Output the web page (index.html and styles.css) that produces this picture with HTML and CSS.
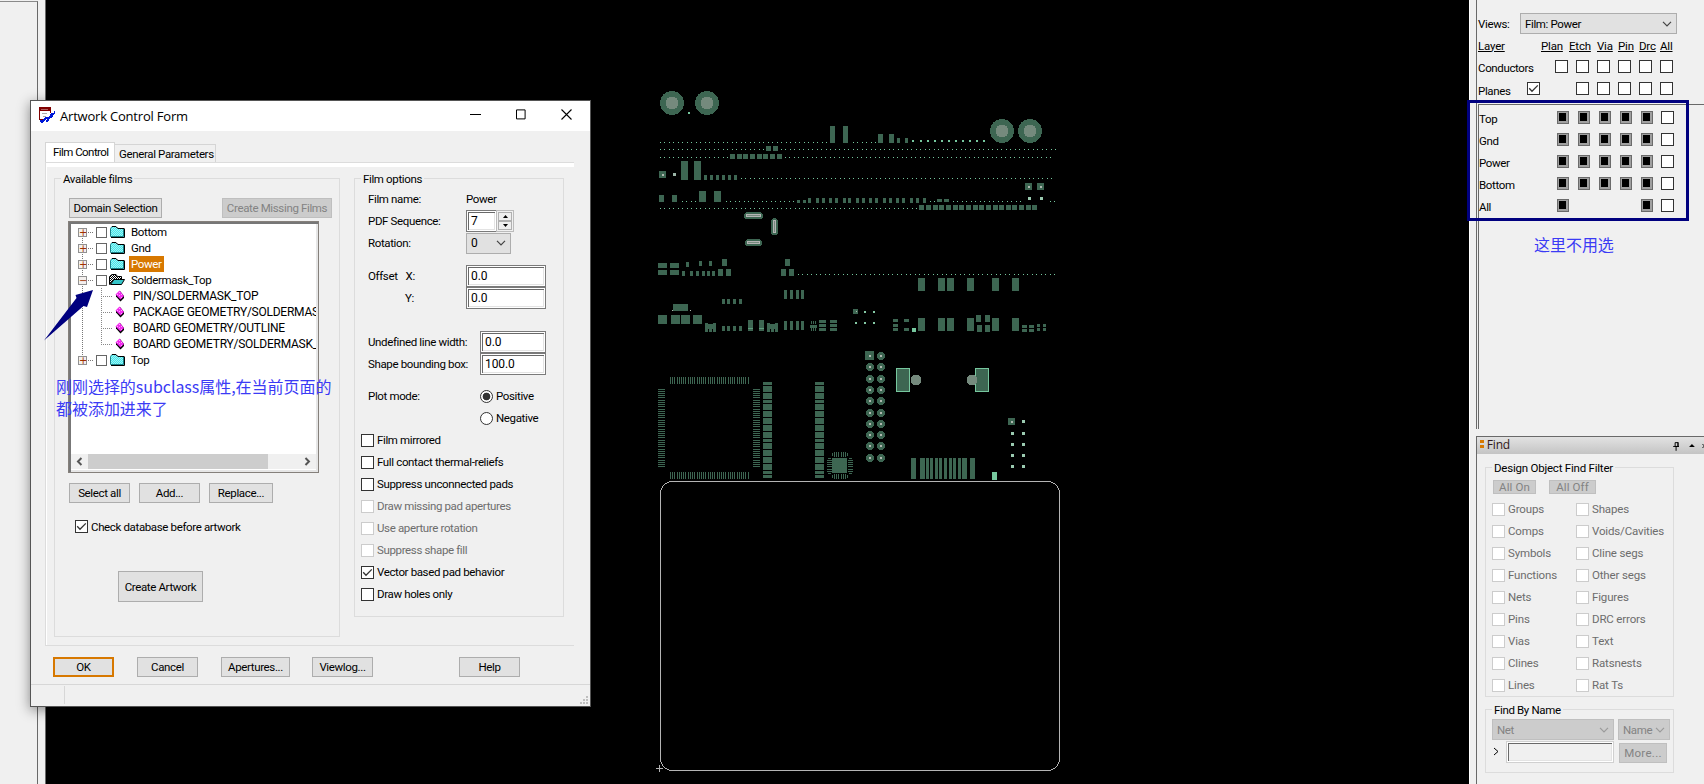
FILE: index.html
```html
<!DOCTYPE html>
<html lang="zh">
<head>
<meta charset="utf-8">
<title>Artwork Control Form</title>
<link rel="stylesheet" href="styles.css">
</head>
<body>
<svg class="defs" width="0" height="0">
  <symbol id="tick" viewBox="0 0 13 13"><path d="M2.2 6.3L5 9.2L10.8 3.4" fill="none" stroke="#333" stroke-width="1.3"/></symbol>
  <symbol id="chev" viewBox="0 0 10 6"><path d="M1 .8L5 4.8L9 .8" fill="none" stroke="currentColor" stroke-width="1.2"/></symbol>
  <pattern id="mesh" width="2" height="2" patternUnits="userSpaceOnUse"><path d="M0 0h2v2h-2z" fill="#3fe9ee"/><path d="M0 0h1v1h-1zM1 1h1v1h-1z" fill="#a5f0f0"/></pattern>
  <pattern id="dark" width="2" height="2" patternUnits="userSpaceOnUse"><path d="M0 0h2v2h-2z" fill="#fff"/><path d="M0 0h1v1h-1zM1 1h1v1h-1z" fill="#000"/></pattern>
  <symbol id="folder" viewBox="0 0 16 14"><path d="M1.500 11.500V3.500L3 1.500H6.500L8.500 3.500H14.500V11.500Z" fill="url(#mesh)" stroke="#1b7f86"/><path d="M2 12.500H15.500V3.500M3 1.500H7L9 3.500H15" fill="none" stroke="#000"/></symbol>
  <symbol id="open" viewBox="0 0 16 14"><path d="M.5 11.500V3.500L3 1.500H7L8.500 3.500H12.500V6.500H4.500Z" fill="url(#dark)" stroke="#000"/><path d="M1.500 11.500L5 6.500H15.500L12.500 11.500Z" fill="#35c4c8" stroke="#000"/></symbol>
  <symbol id="leaf" viewBox="0 0 10 12"><path d="M1 5L5 1L9 6V8L5.500 11.500L1 6.500Z" fill="#000"/><path d="M.5 4.500L4.500.5L9 6L5.500 9.500Z" fill="#f32bf0"/><path d="M2 4.500h1M4 2.500h1M4 5.500h1M6 4.500h1M6 7.500h1" stroke="#ffaaff"/></symbol>
</svg>
<main class="desktop">
  <div class="dock-left"><div class="dock-pane"></div></div>
  <svg class="canvas" id="board" viewBox="46 0 1423 784" width="1423" height="784" shape-rendering="crispEdges"></svg>
  <aside class="dock-right">
    <section class="vis">
      <div class="views"><span>Views:</span><div class="select wide"><span>Film: Power</span><svg class="chev"><use href="#chev"/></svg></div></div>
      <div class="grid heads"><u>Layer</u><u>Plan</u><u>Etch</u><u>Via</u><u>Pin</u><u>Drc</u><u>All</u></div>
      <div class="grid r1"><span>Conductors</span><i class="cb"></i><i class="cb"></i><i class="cb"></i><i class="cb"></i><i class="cb"></i><i class="cb"></i></div>
      <div class="grid r1"><span class="planes"><span>Planes</span><i class="cb"><svg><use href="#tick"/></svg></i></span><b></b><i class="cb"></i><i class="cb"></i><i class="cb"></i><i class="cb"></i><i class="cb"></i></div>
      <div class="layers">
        <div class="grid"><span>Top</span><i class="sw"></i><i class="sw"></i><i class="sw"></i><i class="sw"></i><i class="sw"></i><i class="cb"></i></div>
        <div class="grid"><span>Gnd</span><i class="sw"></i><i class="sw"></i><i class="sw"></i><i class="sw"></i><i class="sw"></i><i class="cb"></i></div>
        <div class="grid"><span>Power</span><i class="sw"></i><i class="sw"></i><i class="sw"></i><i class="sw"></i><i class="sw"></i><i class="cb"></i></div>
        <div class="grid"><span>Bottom</span><i class="sw"></i><i class="sw"></i><i class="sw"></i><i class="sw"></i><i class="sw"></i><i class="cb"></i></div>
        <div class="grid"><span>All</span><i class="sw"></i><b></b><b></b><b></b><i class="sw"></i><i class="cb"></i></div>
      </div>
    </section>
    <section class="find">
      <header class="find-head"><i class="grip"></i><span class="find-title">Find</span>
        <svg width="40" height="12" viewBox="0 0 40 12"><path d="M9.500 2.500h3v4h-3zM7.500 6.500h6M10.500 7v4M12.500 2v5" fill="none" stroke="#000"/><path d="M24 7h6l-3-3z"/><path d="M38 4l4 4M42 4l-4 4" stroke="#000"/></svg>
      </header>
      <div class="group filter"><span class="legend">Design Object Find Filter</span>
        <div class="allbtns"><button class="btn off on1">All On</button><button class="btn off on2">All Off</button></div>
        <div class="objs">
          <label><i class="cb dim"></i>Groups</label><label><i class="cb dim"></i>Shapes</label>
          <label><i class="cb dim"></i>Comps</label><label><i class="cb dim"></i>Voids/Cavities</label>
          <label><i class="cb dim"></i>Symbols</label><label><i class="cb dim"></i>Cline segs</label>
          <label><i class="cb dim"></i>Functions</label><label><i class="cb dim"></i>Other segs</label>
          <label><i class="cb dim"></i>Nets</label><label><i class="cb dim"></i>Figures</label>
          <label><i class="cb dim"></i>Pins</label><label><i class="cb dim"></i>DRC errors</label>
          <label><i class="cb dim"></i>Vias</label><label><i class="cb dim"></i>Text</label>
          <label><i class="cb dim"></i>Clines</label><label><i class="cb dim"></i>Ratsnests</label>
          <label><i class="cb dim"></i>Lines</label><label><i class="cb dim"></i>Rat Ts</label>
        </div>
      </div>
      <div class="group byname"><span class="legend">Find By Name</span>
        <div class="bn1"><div class="select off net"><span>Net</span><svg class="chev"><use href="#chev"/></svg></div><div class="select off name"><span>Name</span><svg class="chev"><use href="#chev"/></svg></div></div>
        <div class="bn2"><svg class="arrow" width="12" height="10" viewBox="0 0 12 10"><path d="M1 1L5 4.500L1 8" fill="none" stroke="#000"/></svg><div class="field grey"></div><button class="btn off more">More...</button></div>
      </div>
    </section>
  </aside>
</main>

<div class="dialog">
  <header class="titlebar">
    <svg width="17" height="17" viewBox="0 0 17 17" shape-rendering="crispEdges"><path d="M1 1h10v11h-10z" fill="#fff"/><path d="M0 0h12v4h-12zM0 0h1v13h-1zM11 0h1v6h-1zM0 12h5v1h-5z" fill="#800000"/><path d="M2 2.500h7" stroke="#b06060"/><path d="M3 6.500h5M4 9.500h3" stroke="#aaa"/><path d="M15 4h1v2l-3 5h-2l-2 4h-2l1-3-4 3h-2v-1l5-4h3l2-4h3zM1 13h3v3h-2z" fill="#0018d8"/></svg>
    <span class="title">Artwork Control Form</span>
    <svg width="104" height="12" viewBox="0 0 104 12"><path d="M0 5.500h11" stroke="#000" stroke-width="1"/><path d="M46.500 .9h8.600v9h-8.600z" fill="none" stroke="#000"/><path d="M91.500 .5l10 10M101.500 .5l-10 10" stroke="#000" stroke-width="1.1"/></svg>
  </header>
  <div class="tabs"><span class="tab active">Film Control</span><span class="tab">General Parameters</span></div>
  <div class="sheet">
    <div class="group films"><span class="legend">Available films</span>
      <div class="bar top"><button class="btn dom">Domain Selection</button><button class="btn off miss">Create Missing Films</button></div>
      <div class="tree">
        <div class="rows">
          <div class="row"><i class="pm">+</i><i class="link"></i><i class="cb s"></i><svg class="ic"><use href="#folder"/></svg><span>Bottom</span></div>
          <div class="row"><i class="pm">+</i><i class="link"></i><i class="cb s"></i><svg class="ic"><use href="#folder"/></svg><span>Gnd</span></div>
          <div class="row"><i class="pm">+</i><i class="link"></i><i class="cb s"></i><svg class="ic"><use href="#folder"/></svg><span class="sel">Power</span></div>
          <div class="row"><i class="pm">−</i><i class="link"></i><i class="cb s"></i><svg class="ic"><use href="#open"/></svg><span>Soldermask_Top</span></div>
          <div class="row kid"><svg class="lf"><use href="#leaf"/></svg><span>PIN/SOLDERMASK_TOP</span></div>
          <div class="row kid"><svg class="lf"><use href="#leaf"/></svg><span>PACKAGE GEOMETRY/SOLDERMAS</span></div>
          <div class="row kid"><svg class="lf"><use href="#leaf"/></svg><span>BOARD GEOMETRY/OUTLINE</span></div>
          <div class="row kid last"><svg class="lf"><use href="#leaf"/></svg><span>BOARD GEOMETRY/SOLDERMASK_</span></div>
          <div class="row"><i class="pm">+</i><i class="link"></i><i class="cb s"></i><svg class="ic"><use href="#folder"/></svg><span>Top</span></div>
        </div>
        <div class="hscroll"><svg width="17" height="15" viewBox="0 0 17 15"><path d="M10.500 4L7 7.500L10.500 11" fill="none" stroke="#555" stroke-width="2"/></svg><i class="thumb"></i><svg width="17" height="15" viewBox="0 0 17 15"><path d="M6.500 4L10 7.500L6.500 11" fill="none" stroke="#555" stroke-width="2"/></svg></div>
      </div>
      <div class="bar edit"><button class="btn w61">Select all</button><button class="btn w61">Add...</button><button class="btn w64">Replace...</button></div>
      <label class="check-db"><i class="cb"><svg><use href="#tick"/></svg></i>Check database before artwork</label>
      <button class="btn create">Create Artwork</button>
    </div>
    <div class="group options"><span class="legend">Film options</span>
      <div class="opt"><span class="k">Film name:</span><span>Power</span></div>
      <div class="opt"><span class="k">PDF Sequence:</span><div class="field f31">7</div><div class="spin"><i><svg width="5" height="3"><path d="M0 3h5l-2.500-3z"/></svg></i><i><svg width="5" height="3"><path d="M0 0h5l-2.500 3z"/></svg></i></div></div>
      <div class="opt"><span class="k">Rotation:</span><div class="select rot"><span>0</span><svg class="chev"><use href="#chev"/></svg></div></div>
      <div class="opt gap1"><span class="k offs"><span>Offset</span><span>X:</span></span><div class="field f80">0.0</div></div>
      <div class="opt"><span class="k ky">Y:</span><div class="field f80">0.0</div></div>
      <div class="opt gap2"><span class="k k2">Undefined line width:</span><div class="field f66">0.0</div></div>
      <div class="opt"><span class="k k2">Shape bounding box:</span><div class="field f66">100.0</div></div>
      <div class="opt gap3"><span class="k k2">Plot mode:</span><i class="radio on"></i><span class="rl">Positive</span></div>
      <div class="opt"><span class="k k2"></span><i class="radio"></i><span class="rl">Negative</span></div>
      <label class="chk"><i class="cb"></i>Film mirrored</label>
      <label class="chk"><i class="cb"></i>Full contact thermal-reliefs</label>
      <label class="chk"><i class="cb"></i>Suppress unconnected pads</label>
      <label class="chk gr"><i class="cb dim"></i>Draw missing pad apertures</label>
      <label class="chk gr"><i class="cb dim"></i>Use aperture rotation</label>
      <label class="chk gr"><i class="cb dim"></i>Suppress shape fill</label>
      <label class="chk"><i class="cb"><svg><use href="#tick"/></svg></i>Vector based pad behavior</label>
      <label class="chk"><i class="cb"></i>Draw holes only</label>
    </div>
  </div>
  <div class="actions"><button class="btn w61 ok">OK</button><button class="btn w61 cancel">Cancel</button><button class="btn ap">Apertures...</button><button class="btn w61 vl">Viewlog...</button><button class="btn w61 help">Help</button></div>
  <footer class="status"><i></i><svg width="8" height="8" viewBox="0 0 8 8"><path d="M6 0h2v2h-2zM3 3h2v2h-2zM6 3h2v2h-2zM0 6h2v2h-2zM3 6h2v2h-2zM6 6h2v2h-2z" fill="#bfbfbf"/></svg></footer>
</div>

<svg class="pointer" width="52" height="54" viewBox="0 0 52 54"><path d="M1 51.500L33.500 9L32.500 6L50 1L44 18L40.500 17Z" fill="#00007f"/></svg>
<p class="note note-tree">刚刚选择的subclass属性,在当前页面的<br>都被添加进来了</p>
<div class="frame"></div>
<p class="note note-vis">这里不用选</p>
<script src="board.js"></script>
</body>
</html>
```
FILE: styles.css
```css
* { box-sizing: border-box; }
body { margin: 0; width: 1704px; height: 784px; overflow: hidden; background: #f0f0f0; color: #000; font: 11.5px/14px Roboto, "Liberation Sans", sans-serif; letter-spacing: -0.36px; position: relative; }
i { font-style: normal; }
.defs { position: absolute; }
.desktop { display: flex; height: 784px; }
.dock-left { width: 46px; flex: none; padding-top: 1px; border-right: 1px solid #6b6b6b; }
.dock-pane { width: 38px; height: 783px; border-right: 1px solid #696969; border-top: 1px solid #8a8a8a; }
.canvas { flex: none; background: #000; display: block; }
.dock-right { flex: 1; min-width: 0; overflow: hidden; padding-left: 6px; border-left: 1px solid #fff; }

.cb { display: block; flex: none; width: 13px; height: 13px; background: #fff; border: 1px solid #333; }
.cb svg { display: block; width: 13px; height: 13px; margin: -1px; }
.cb.dim { border-color: #ccc; }
.cb.s { width: 11px; height: 11px; border-color: #666; }
.sw { display: block; width: 12px; height: 13px; background: #000; border: 2px solid #a0a0a0; border-width: 2px 3px 3px 2px; outline: 1px solid #6b6b6b; outline-offset: -1px; }
.btn { flex: none; height: 20px; padding: 0; border: 1px solid #adadad; background: #e1e1e1; color: #000; font: inherit; letter-spacing: inherit; text-align: center; white-space: nowrap; }
.btn.off { background: #ccc; border-color: #bfbfbf; color: #838383; }
.select { display: flex; flex: none; justify-content: space-between; align-items: center; height: 21px; padding: 0 4px; border: 1px solid #adadad; background: #e1e1e1; }
.select.off { background: #ccc; border-color: #bfbfbf; color: #838383; }
.chev { width: 10px; height: 6px; color: #444; }
.off .chev { color: #9b9b9b; }
.field { flex: none; height: 22px; border: 1px solid #7a7a7a; background: #fff; box-shadow: inset 0 0 0 1px #fff, inset 2px 2px 0 #696969, inset -2px -2px 0 #e3e3e3; padding: 3px 0 0 4px; font-size: 12px; letter-spacing: -.1px; }
.group { position: relative; border: 1px solid #dcdcdc; }
.legend { position: absolute; top: -7px; left: 6px; padding: 0 2px; background: #f0f0f0; white-space: nowrap; }

.vis { height: 429px; border-left: 1px solid #696969; padding-top: 13px; }
.views { display: flex; align-items: center; padding-left: 1px; height: 21px; }
.views > span { width: 42px; }
.wide { width: 157px; padding-right: 4px; }
.grid { display: grid; grid-template-columns: 77px repeat(6, 21px); height: 22px; align-items: center; padding-left: 1px; }
.grid u { white-space: nowrap; letter-spacing: -.2px; }
.heads { grid-template-columns: 63px 28px 28px 21px 21px 21px 21px; height: 23px; }
.r1 > .cb { margin-top: -3px; }
.planes { display: flex; align-items: center; padding-top: 1px; }
.planes span { width: 49px; }
.planes .cb { margin-top: -4px; }
.layers { border-left: 1px solid #696969; border-top: 1px solid #696969; height: 325px; margin: 3px 0 0 1px; padding-top: 2px; }
.layers .grid { grid-template-columns: 78px repeat(6, 21px); padding-left: 0; }
.layers span { padding-top: 1px; }
.layers .sw { margin-top: -2px; }
.layers .cb { margin: -1px 0 0 -1px; }

.find { border-left: 1px solid #696969; border-top: 1px solid #696969; height: 348px; margin-top: 7px; }
.find-head { display: flex; align-items: center; height: 17px; padding-left: 3px; background: linear-gradient(#e2e2e2, #c4c4c4); }
.grip { width: 4px; height: 9px; margin-top: -2px; background: linear-gradient(#d77800 3px, transparent 3px 5px, #d77800 5px 8px, transparent 8px); }
.find-title { width: 186px; margin: -2px 0 0 3px; font: 12px/14px "Open Sans", sans-serif; color: #301818; letter-spacing: -0.2px; }
.filter { width: 189px; height: 230px; margin: 13px 0 0 8px; padding: 12px 0 0 6px; }
.filter > .legend { letter-spacing: -.22px; }
.allbtns { display: flex; gap: 13px; padding-left: 1px; }
.allbtns .btn { height: 14px; line-height: 12px; letter-spacing: .1px; }
.on1 { width: 43px; } .on2 { width: 47px; }
.objs { display: grid; grid-template-columns: 84px 100px; grid-auto-rows: 22px; margin-top: 4px; color: #6d6d6d; letter-spacing: -.15px; }
.objs label { display: flex; align-items: center; gap: 3px; white-space: nowrap; }
.byname { width: 189px; height: 64px; margin: 12px 0 0 8px; padding: 9px 0 0 6px; }
.bn1 { display: flex; gap: 4px; }
.net { width: 122px; } .name { width: 52px; padding: 0 4px; }
.bn2 { display: flex; align-items: center; padding-top: 1px; }
.arrow { width: 14px; }
.grey { width: 108px; background: #f0f0f0; border-color: #d0d0d0; }
.more { width: 48px; margin: 2px 0 0 5px; letter-spacing: .3px; }

.dialog { position: absolute; left: 30px; top: 100px; width: 561px; height: 607px; display: flex; flex-direction: column; background: #f0f0f0; border: 1px solid #555; box-shadow: 0 3px 12px rgba(0,0,0,.45); }
.titlebar { display: flex; align-items: center; height: 30px; flex: none; background: #fff; padding: 0 16px 2px 8px; }
.titlebar .title { flex: 1; margin-left: 4px; padding-top: 1px; font: 13px/16px "Open Sans", sans-serif; letter-spacing: -.2px; }
.tabs { display: flex; align-items: flex-end; height: 31px; padding-left: 14px; flex: none; }
.tab { height: 18px; width: 101px; padding: 2px 0 0 4px; border: 1px solid #d5d5d5; border-left: 0; border-bottom: 0; white-space: nowrap; }
.tab.active { width: 70px; height: 20px; background: #fff; border-left: 1px solid #d5d5d5; padding: 2px 0 0 7px; letter-spacing: -.55px; }
.sheet { display: flex; align-items: flex-start; flex: none; width: 529px; height: 484px; margin-left: 14px; border: 1px solid #dcdcdc; border-right: 0; box-shadow: inset 0 4px 0 #fff, inset 1px 0 0 #fff; padding: 15px 0 0 8px; }
.films { width: 286px; height: 459px; padding: 19px 0 0 14px; }
.options { width: 210px; height: 439px; margin-left: 14px; padding: 9px 0 0 6px; }
.bar { display: flex; }
.dom { width: 93px; } .miss { width: 110px; margin-left: 60px; }
.tree { display: flex; flex-direction: column; width: 251px; height: 252px; margin: 3px 0 0 -1px; border: 1px solid #85807b; background: #fff; padding: 1px; box-shadow: inset 2px 2px 0 #777, inset -2px -2px 0 #e6e6e6; }
.rows { flex: 1; overflow: hidden; margin: 1px 1px 0 1px; padding: 0 0 0 7px; background: repeating-linear-gradient(#777 0 1px, transparent 1px 2px) 11px 8px / 1px 128px no-repeat; }
.row { display: flex; align-items: center; height: 16px; white-space: nowrap; }
.row span { margin-left: 4px; padding: 1px 2px; height: 16px; }
.row span.sel { background: #d77800; color: #fff; }
.pm { flex: none; width: 9px; height: 9px; border: 1px solid #919191; background: #f4f0ee; color: #a03000; font: 10px/7px "DejaVu Sans", sans-serif; text-align: center; letter-spacing: 0; }
.link { width: 5px; height: 1px; margin: 0 3px 0 1px; background: repeating-linear-gradient(90deg, #777 0 1px, transparent 1px 2px); }
.ic { flex: none; width: 16px; height: 14px; margin-left: 2px; }
.kid { padding-left: 23px; font-size: 12px; letter-spacing: -.24px; background: repeating-linear-gradient(#888 0 1px, transparent 1px 2px) 16px 0 / 1px 16px no-repeat, repeating-linear-gradient(90deg, #888 0 1px, transparent 1px 2px) 16px 8px / 11px 1px no-repeat; }
.kid { background-position: 23px 0, 23px 8px; }
.kid.last { background-size: 1px 9px, 11px 1px; }
.lf { flex: none; width: 10px; height: 12px; margin-left: 14px; }
.kid span { margin-left: 6px; }
.hscroll { display: flex; flex: none; height: 15px; margin: 0 1px 2px; background: #f0f0f0; }
.thumb { width: 181px; margin-right: 31px; background: #cdcdcd; }
.edit { gap: 9px; margin-top: 10px; }
.w61 { width: 61px; } .w64 { width: 64px; }
.check-db { display: flex; gap: 3px; align-items: center; margin: 17px 0 0 6px; height: 13px; }
.create { display: block; width: 85px; height: 31px; margin: 38px 0 0 49px; }
.opt { display: flex; align-items: center; height: 22px; padding-left: 7px; white-space: nowrap; }
.k { width: 98px; } .k2 { width: 112px; } .ky { padding-left: 37px; }
.offs { display: flex; gap: 8px; }
.f31 { width: 31px; } .f80 { width: 80px; } .f66 { width: 66px; }
.spin { width: 18px; height: 22px; border: 1px solid #bbb; padding: 1px; margin-left: -1px; }
.spin i { display: flex; height: 9px; align-items: center; justify-content: center; border: 1px solid #b0b0b0; background: #eee; }
.rot { width: 45px; }
.rot span { font-size: 12px; }
.gap1 { margin-top: 11px; } .gap2 { margin-top: 22px; } .gap3 { margin-top: 10px; }
.radio { width: 13px; height: 13px; border: 1px solid #333; border-radius: 50%; background: #fff; }
.radio.on { background: radial-gradient(#333 3.5px, #fff 4.2px); }
.rl { margin-left: 3px; }
.chk { display: flex; align-items: center; gap: 3px; height: 22px; white-space: nowrap; }
.gr { color: #6d6d6d; }
.actions { display: flex; flex: none; padding: 11px 0 0 22px; height: 38px; }
.ok { border: 2px solid #d77800; line-height: 14px; }
.cancel, .ap { margin-left: 23px; } .ap { width: 69px; } .vl { margin-left: 22px; } .help { margin-left: 86px; }
.status { display: flex; justify-content: space-between; align-items: flex-end; flex: 1; border-top: 1px solid #d7d7d7; padding: 1px 2px 2px 33px; }
.status i { align-self: stretch; width: 1px; background: #d7d7d7; }

.pointer { position: absolute; left: 43px; top: 289px; }
.note { position: absolute; margin: 0; color: #3b3bf5; font: 16px/22px "Noto Sans CJK SC", sans-serif; letter-spacing: -.04px; white-space: nowrap; }
.note-tree { left: 56px; top: 375px; }
.note-vis { left: 1534px; top: 233px; }
.frame { position: absolute; left: 1467px; top: 100px; width: 222px; height: 121px; border: 3px solid #00007f; }
```
FILE: board.js
```js
const board = document.getElementById('board');
const PAD = '#3d6652', VIA = '#76c79e', HOLE = '#758a7d', DRILL = '#b0b8b0';
let out = '';
const rect = (x, y, w, h, fill = PAD) => { out += `<path d="M${x} ${y}h${w}v${h}h-${w}z" fill="${fill}"/>`; };
const row = (xs, y, w, h, fill) => xs.forEach(x => rect(x, y, w, h, fill));
const dots = (x1, x2, y) => { out += `<path d="M${x1} ${y + .5}H${x2}" stroke="${VIA}" stroke-dasharray="1 3 1 4"/>`; };
const disc = (x, y, r, fill = PAD) => { out += `<circle cx="${x}" cy="${y}" r="${r}" fill="${fill}"/>`; };
const slot = (x, y, w, h) => {
  const r = Math.min(w, h) / 2;
  out += `<rect x="${x}" y="${y}" width="${w}" height="${h}" rx="${r}" fill="${PAD}"/><rect x="${x + 2.500}" y="${y + 2.500}" width="${w - 5}" height="${h - 5}" rx="1.5" fill="${HOLE}" stroke="#b4b4b4"/>`;
};

// Mounting holes
[[672, 103], [707, 103], [1002, 131], [1030, 131]].forEach(([x, y]) => { disc(x, y, 12); disc(x, y, 6.5, HOLE); });
rect(688, 112, 2, 2, VIA);

// Connector rows
dots(660, 829, 142); row([830, 843], 126, 5, 17); dots(853, 877, 142);
row([878, 889], 134, 5, 9); row([897, 905], 138, 3, 5);
row([912, 920, 927, 934, 941, 948, 955, 962, 969, 976, 983], 140, 2, 2, VIA);
dots(660, 765, 149); row([766, 773], 146, 5, 5); dots(781, 1058, 149);
dots(660, 729, 157); row([730, 737, 743, 750, 757, 763, 770, 777], 154, 5, 5); dots(785, 1053, 157);
rect(659, 171, 7, 7); rect(662, 174, 2, 2, DRILL); rect(673, 173, 3, 3, '#9ab5a6');
row([681, 694], 161, 7, 19); row([704, 710, 716, 722, 728, 734], 175, 3, 5); dots(741, 1054, 178);
row([659, 672], 195, 5, 7); dots(682, 698, 201); row([699, 714], 191, 7, 11); dots(726, 796, 201);
row([797, 803], 200, 3, 3);
row([808, 816, 822, 829, 835, 843, 848, 856, 862, 869, 875, 883, 889, 896, 902, 910, 916, 923], 198, 3, 5);
dots(930, 936, 201); row([937, 944], 199, 5, 3); dots(953, 1023, 201); dots(1050, 1056, 201);
row([1025, 1037], 183, 7, 7); row([1028, 1040], 186, 2, 2, DRILL); row([1028, 1040], 197, 3, 3, '#9bcab0');
dots(660, 918, 208);
row([919, 926, 933, 939, 946, 953, 959, 966, 973, 979, 986, 993, 999, 1006, 1012, 1019, 1026, 1032], 205, 5, 5);
slot(744, 212, 19, 7); slot(745, 239, 17, 7); slot(771, 218, 7, 17);

// Passive components
row([658, 670], 263, 9, 5); row([658, 670], 270, 9, 5);
rect(686, 262, 3, 5); row([699, 709], 261, 3, 5); row([722, 785], 259, 5, 7);
row([682, 690, 696, 702, 707, 712], 271, 3, 5); row([718, 726, 781, 789], 269, 5, 7); dots(798, 1056, 274);
row([722, 727, 733, 739], 299, 3, 5); row([722, 727, 733, 739], 326, 3, 5);
row([784, 790, 796, 801], 290, 3, 9); row([784, 790, 796, 801], 321, 3, 9);
rect(673, 304, 15, 7); row([672, 690], 310, 1, 1, DRILL); row([658, 671, 681, 693], 315, 9, 9);
[705, 767].forEach(x => { row([x, x + 8], 323, 3, 9); rect(x, 324, 11, 5); rect(x + 4, 324, 3, 8); });
row([748, 759], 320, 5, 11); row([748, 759], 328, 5, 1, '#5d9c7c');
rect(810, 325, 7, 3); row([811, 813, 815], 321, 1, 3); row([811, 813, 815], 328, 1, 3);
[320, 324, 328].forEach(y => row([819, 830], y, 7, 3));
rect(853, 309, 5, 5); rect(856, 311, 1, 1, DRILL);
row([864, 873], 311, 2, 2, '#84c9a5'); row([855, 864, 873], 322, 2, 2, '#84c9a5');
[278, 318].forEach(y => row([918, 938, 947, 967, 992, 1012], y, 7, 13));
row([893, 904], 319, 5, 3); rect(893, 324, 5, 3); row([893, 904], 328, 5, 3); rect(912, 328, 4, 4, VIA);
row([976, 985], 315, 5, 7); row([977, 985], 325, 5, 7);
[325, 329].forEach(y => row([1022, 1029], y, 5, 3));
[324, 328].forEach(y => row([1037, 1043], y, 3, 3));

// Quad flat pack
const fine = '1 1 1 1 1 1 1 1 1 2 1 1 1 1 1 1 1 2';
[380.5, 475.5].forEach(y => { out += `<path d="M670 ${y}H749" stroke="${PAD}" stroke-width="7" stroke-dasharray="${fine}" stroke-dashoffset="13"/>`; });
[661.5, 756.5].forEach(x => { out += `<path d="M${x} 389V467" stroke="${PAD}" stroke-width="7" stroke-dasharray="${fine}"/>`; });

// Memory columns
[[382, 3], [386, 6], [393, 6], [400, 3], [404, 6], [411, 6], [418, 6], [425, 6], [432, 6], [439, 3], [443, 6], [450, 6], [457, 6], [464, 6], [471, 3], [475, 3]]
  .forEach(([y, h]) => row([763, 815], y, 9, h));

// Small leadless package
rect(832, 458, 15, 15);
[452, 474].forEach(y => { row([834, 836, 838, 841, 843, 845], y, 1, 5); row([832, 847], y + 1, 1, 3); });
[827, 848].forEach(x => { [460, 462, 464, 466, 469, 471].forEach(y => rect(x, y, 5, 1)); rect(x + 1, 458, 3, 1); rect(x + 1, 473, 3, 1); });

// Pin header
rect(865, 351, 9, 9); rect(869, 355, 2, 2, DRILL);
disc(881, 356, 4); rect(880, 355, 2, 2, DRILL);
[367, 379, 390, 401, 413, 424, 435, 446, 458].forEach(y => [870, 881].forEach(x => { disc(x, y, 4); rect(x - 1, y - 1, 2, 2, DRILL); }));

// Edge tabs
[896, 975].forEach(x => { out += `<rect x="${x + .5}" y="368.5" width="13" height="23" fill="${PAD}" stroke="${VIA}"/>`; });
disc(916, 380, 5.5, HOLE); disc(972, 380, 5.5, HOLE);
row([911, 920, 962, 970], 458, 5, 21); row([926, 930, 935, 939, 944, 949, 953, 958], 458, 3, 21);
rect(992, 472, 5, 8, VIA);
rect(1008, 418, 7, 7); rect(1011, 421, 2, 2, DRILL); rect(1022, 420, 3, 3, '#9bcab0');
[432, 443, 454, 465].forEach(y => row([1011, 1022], y, 3, 3, '#9bcab0'));

// Board outline and origin
out += '<rect x="660.5" y="481.5" width="399" height="289" rx="12" fill="none" stroke="#b4b4b4"/>';
out += '<path d="M656 768.5h7M659.500 765v7" stroke="#b4b4b4"/>';
board.innerHTML = out;
```
